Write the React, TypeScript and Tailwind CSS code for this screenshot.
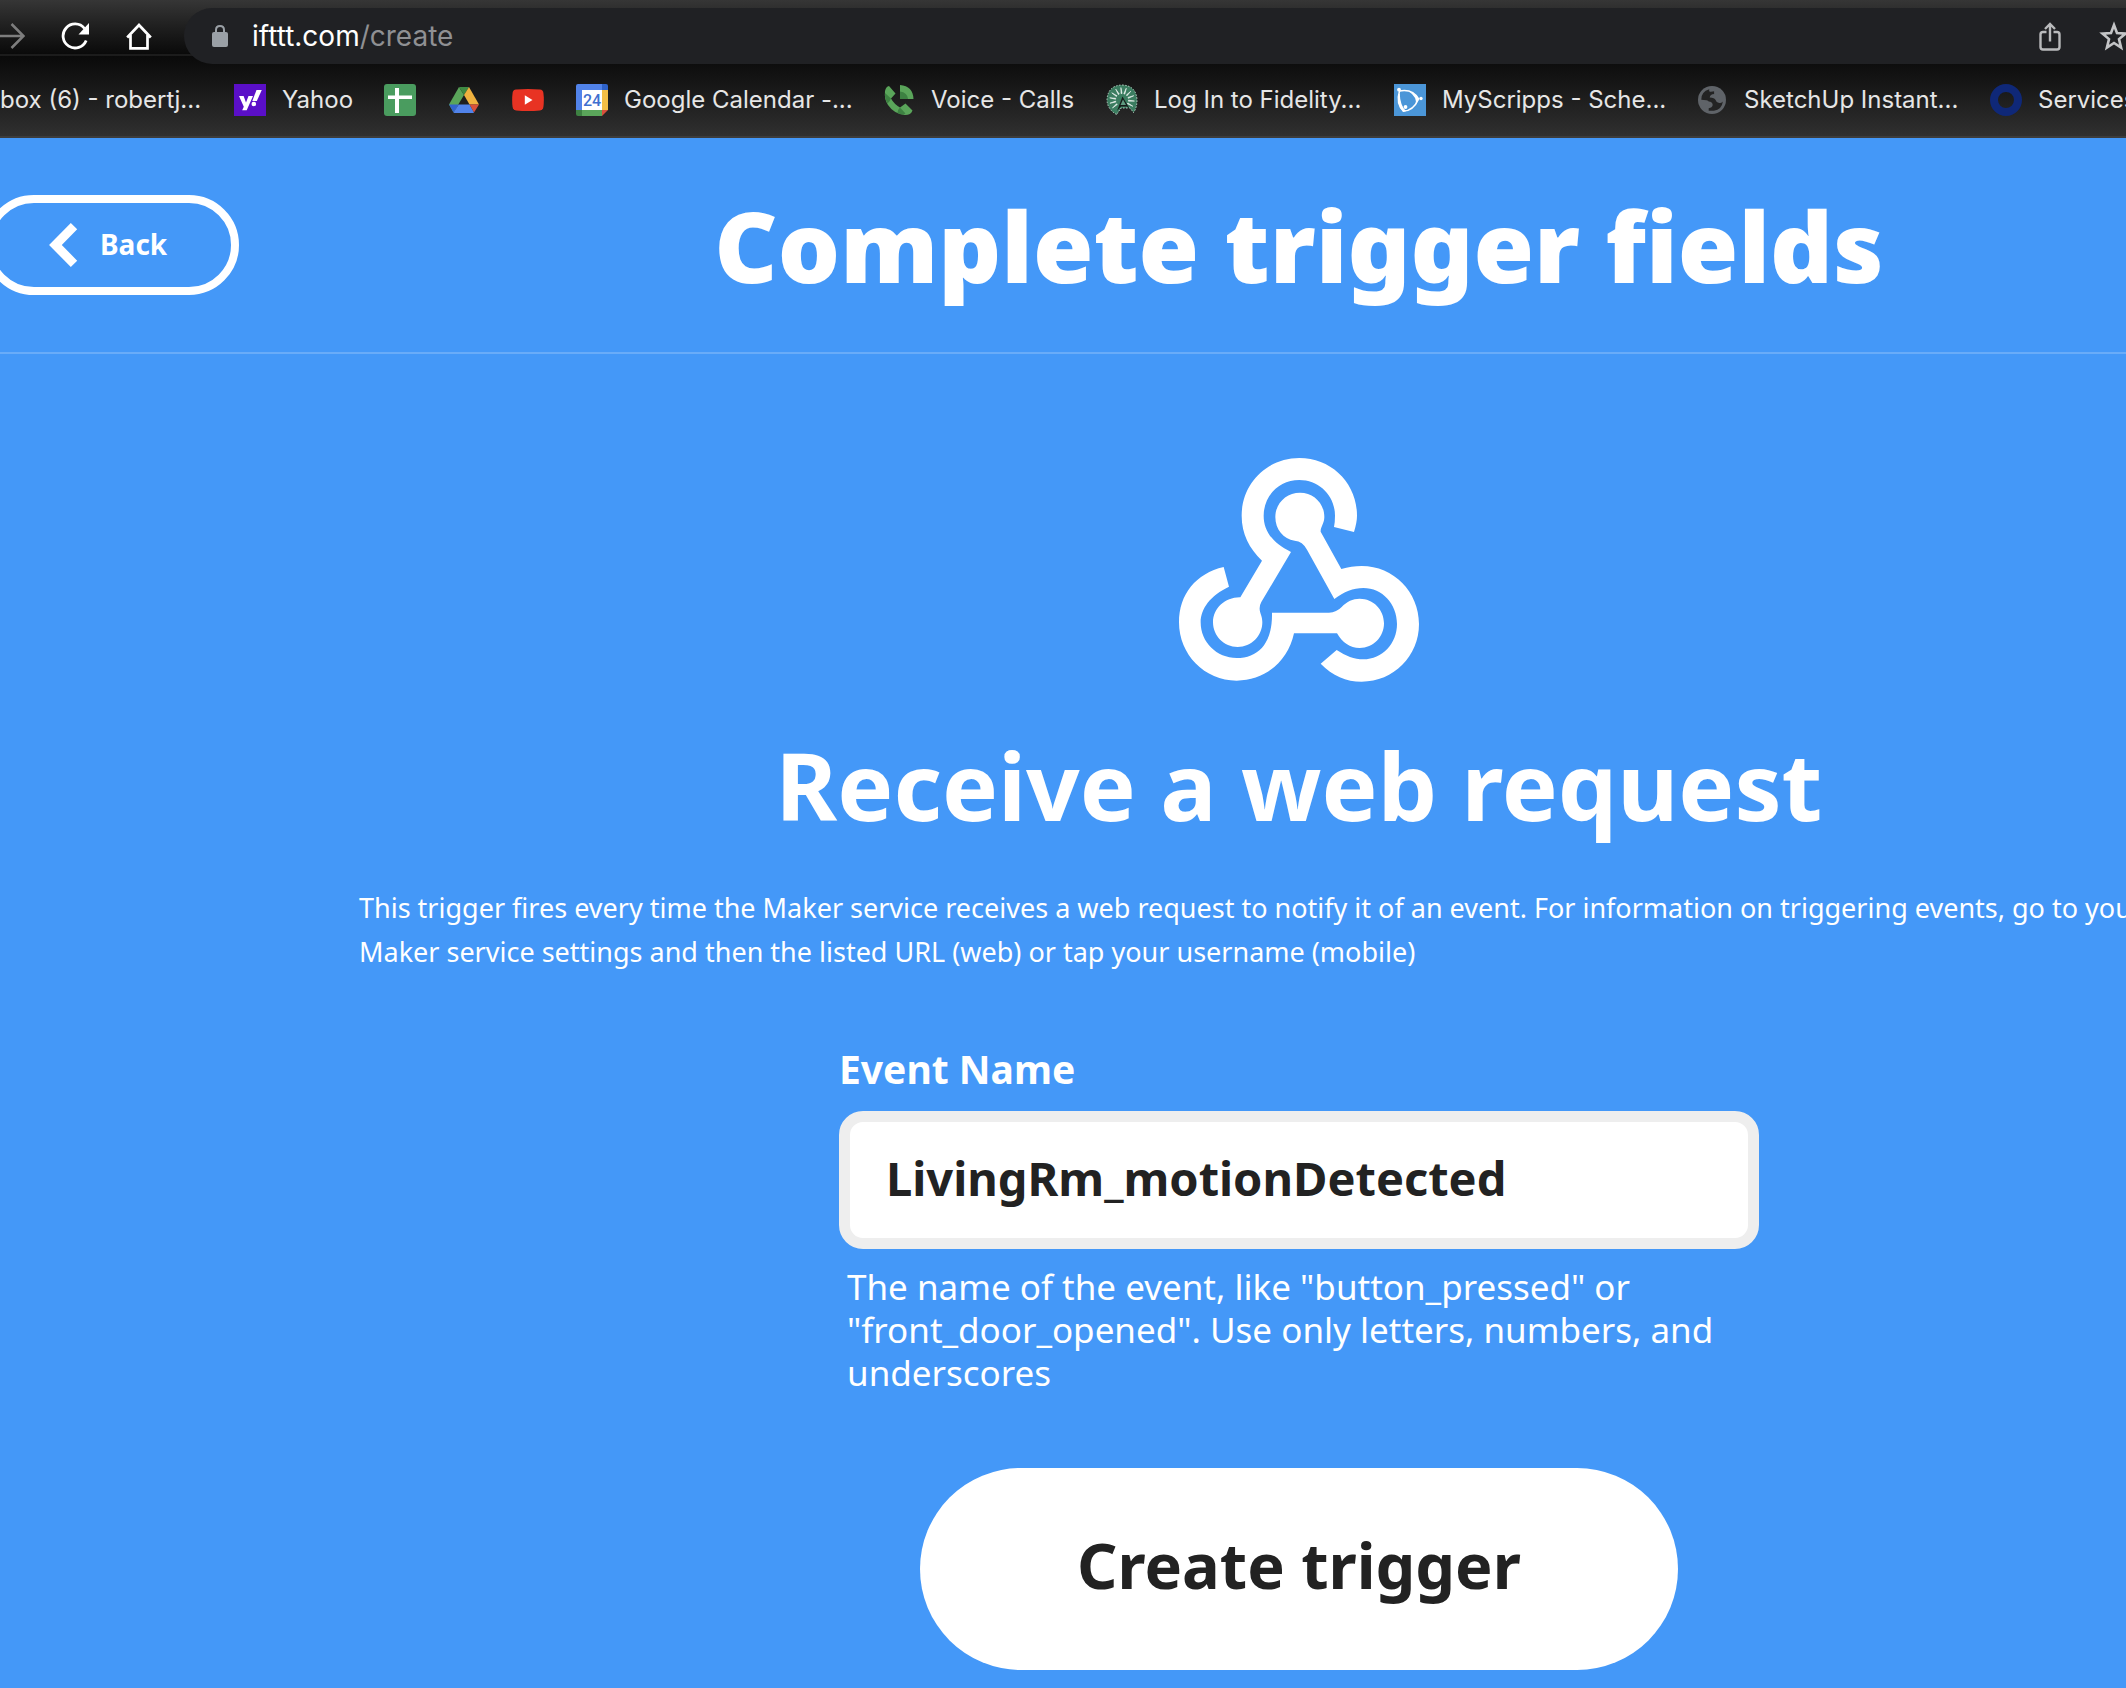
import { useState, type ReactNode } from "react";

function YahooIcon() {
  return (
    <svg viewBox="0 0 32 32" className="h-8 w-8" aria-hidden="true">
      <rect width="32" height="32" fill="#5a0fc8" />
      <path d="M5 12h4.600l2.400 6.500 2.500-6.500H19l-6.300 14.300H8.200l1.600-3.500z" fill="#fff" />
      <path d="M22.500 6h5.300l-5 11h-4.500z" fill="#fff" />
      <circle cx="19.800" cy="20" r="2.300" fill="#fff" />
    </svg>
  );
}

function SheetsIcon() {
  return (
    <svg viewBox="0 0 32 32" className="h-8 w-8" aria-hidden="true">
      <rect width="32" height="32" rx="3" fill="#4a9c5f" />
      <path d="M11 4h4v25h-4zM4 11.500h24v3.500H4z" fill="#fff" />
    </svg>
  );
}

function DriveIcon() {
  return (
    <svg viewBox="0 0 32 32" className="h-8 w-8" aria-hidden="true">
      <path d="M11 3 1 20.500 5.500 28.500 16 11z" fill="#5aa55a" />
      <path d="M11 3h10l-5 8z" fill="#3f8a43" />
      <path d="M21 3 31 20.500h-9.500L16 11z" fill="#f0b23f" />
      <path d="M1 20.500h9.700L5.500 28.500z" fill="#3263cf" />
      <path d="M10.700 20.500h10.800L26 28.500q-.6.500-1.500.500h-17q-1.200 0-2-.5z" fill="#5183ea" />
      <path d="M21.500 20.500H31L26 28.500z" fill="#d9503b" />
    </svg>
  );
}

function YoutubeIcon() {
  return (
    <svg viewBox="0 0 32 32" className="h-8 w-8" aria-hidden="true">
      <path d="M4 5.600Q16 4.400 28 5.600q3 .4 3.400 3.400.9 7 0 14-.4 3-3.400 3.400-12 1.200-24 0Q1 26 .6 23q-.9-7 0-14Q1 6 4 5.600z" fill="#e83323" />
      <path d="M12.800 11.300v9.400L20.500 16z" fill="#fff" />
    </svg>
  );
}

function CalendarIcon() {
  return (
    <svg viewBox="0 0 32 32" className="h-8 w-8" aria-hidden="true">
      <path d="M2 0h24v6H6v20H0V2Q0 0 2 0z" fill="#5183ea" />
      <path d="M26 0h4q2 0 2 2v4h-6z" fill="#2e62c9" />
      <path d="M26 6h6v20h-6z" fill="#f3be45" />
      <path d="M6 26h20v6H6z" fill="#5aa55a" />
      <path d="M0 26h6v6H2q-2 0-2-2z" fill="#3d8142" />
      <path d="M26 26h6l-6 6z" fill="#d9503b" />
      <path d="M6 6h20v20H6z" fill="#fff" />
      <text x="16" y="21.500" textAnchor="middle" fontSize="16" fontWeight="500" fill="#3f6fd0" fontFamily="Roboto, sans-serif">24</text>
    </svg>
  );
}

function VoiceIcon() {
  return (
    <svg viewBox="0 0 32 32" className="h-8 w-8" aria-hidden="true">
      <path d="M6 2 12.500 9.500 8 14.500Q11 20 17 23.500L22.500 19.500 29.500 26.500Q28 31 22 31 11 30 5 21 1 15 2 7 3 2.500 6 2z" fill="#5aa55a" />
      <path d="M2 9 8 14.500Q7 17.500 4.500 19.500 1.500 14 2 9zM17 23.500l5.500 6Q19 31.500 14.500 29q.5-4 2.500-5.500z" fill="#3d8142" />
      <path d="M17 1q13 1 13.500 14H17z" fill="#5aa55a" />
      <path d="M17 7.500q7.500 1 8 7.500h-8z" fill="#3d8142" />
    </svg>
  );
}

const RAYS = [-130, -105, -80, -55, -30, -5, 20, 45, 70, 95, 120];

function FidelityIcon() {
  return (
    <svg viewBox="0 0 32 32" className="h-8 w-8" aria-hidden="true">
      <path d="M10.500 30.500Q1 25 1 15.500 2 1.500 16 1 30 1.500 31 15.500 31 24 27.500 28.500L24 24h-9z" fill="#3b7d60" stroke="#b9d3c6" strokeWidth="1" strokeDasharray="1.500 1.500" />
      {RAYS.map((angle) => (
        <path key={angle} d="M15.600 9.500 16 3.500l.6 6z" fill="#eaf2ee" stroke="#eaf2ee" strokeWidth=".6" transform={`rotate(${angle} 16 16)`} />
      ))}
      <path d="M16.500 12.500 11 27l4-4.500h6l3 3z" fill="#161b19" />
      <path d="M17 15.500 14.500 21h5.500z" fill="#5f9a80" />
    </svg>
  );
}

function ScrippsIcon() {
  return (
    <svg viewBox="0 0 32 32" className="h-8 w-8" aria-hidden="true">
      <rect width="32" height="32" fill="#4b96d8" />
      <path d="M5.500 7C14 5.500 21 8.500 24.500 15 21 23 16 27 9.500 27 4 22 3.500 14 5.500 7z" fill="none" stroke="#fff" strokeWidth="1.600" />
      <path d="M4.500 10Q3 21 9 28l3-.8Q6 21 5.800 10zM15 7.500q7 2 10 7.500l-3.200 6q1.400-8-6.800-13.500z" fill="#fff" />
      <circle cx="5" cy="5.700" r="1.900" fill="#fff" />
      <circle cx="27" cy="14.500" r="1.700" fill="#fff" />
      <circle cx="11.500" cy="23" r="1.900" fill="#fff" />
    </svg>
  );
}

function GlobeIcon() {
  return (
    <svg viewBox="0 0 32 32" className="h-8 w-8" aria-hidden="true">
      <circle cx="16" cy="16" r="14" fill="#5f6368" />
      <path d="M5.300 15.800q-.3-8 8-10.500-.6 1.500.4 2.400 2 .3 4.600-.4v2.800q-4.200.4-4.600 3.500 4.800.2 6 2.600.7 2.700 3.500 2.700 2.800.4 3.700-1.300-1.200 8.300-9 9.200h-5.200v-2.600q3.500-.4 4-3.200-.2-3.400-4-3.600-.6-1.600-7.400-1.600z" fill="#232323" />
      <path d="M18.300 6.500q3.800.3 6 3-.3 1.400-2.500 1.500-3 .4-3.500-1.500z" fill="#5f6368" />
    </svg>
  );
}

function RingIcon() {
  return (
    <svg viewBox="0 0 32 32" className="h-8 w-8" aria-hidden="true">
      <circle cx="16" cy="16" r="12" fill="none" stroke="#0f2878" strokeWidth="8" />
    </svg>
  );
}

type Bookmark = { id: string; name: string; label?: string; width?: string; icon?: ReactNode };

const BOOKMARKS: Bookmark[] = [
  { id: "inbox", name: "Inbox", label: "box (6) - robertj...", width: "w-[202px]" },
  { id: "yahoo", name: "Yahoo", label: "Yahoo", width: "w-[70px]", icon: <YahooIcon /> },
  { id: "sheets", name: "Sheets", icon: <SheetsIcon /> },
  { id: "drive", name: "Drive", icon: <DriveIcon /> },
  { id: "youtube", name: "YouTube", icon: <YoutubeIcon /> },
  { id: "calendar", name: "Calendar", label: "Google Calendar -...", width: "w-[227px]", icon: <CalendarIcon /> },
  { id: "voice", name: "Voice", label: "Voice - Calls", width: "w-[143px]", icon: <VoiceIcon /> },
  { id: "fidelity", name: "Fidelity", label: "Log In to Fidelity...", width: "w-[208px]", icon: <FidelityIcon /> },
  { id: "scripps", name: "MyScripps", label: "MyScripps - Sche...", width: "w-[222px]", icon: <ScrippsIcon /> },
  { id: "sketchup", name: "SketchUp", label: "SketchUp Instant...", width: "w-[214px]", icon: <GlobeIcon /> },
  { id: "services", name: "Services", label: "Services", width: "w-[100px]", icon: <RingIcon /> },
];

function BrowserChrome() {
  return (
    <div className="font-[Inter,sans-serif]">
      <div className="flex h-14 items-start border-b-2 border-[#1c1c1c] bg-linear-to-b from-[#363636] to-[#0a0a0a]">
        <div className="flex h-[72px] shrink-0 items-center gap-9">
          <button type="button" aria-label="Forward" className="h-7 w-[25px]">
            <svg viewBox="0 0 25 28" className="h-7 w-[25px]" fill="none" stroke="#7d7d7d" strokeWidth="2.500" aria-hidden="true">
              <path d="M0 14h23M11.500 2 23.500 14 11.500 26" />
            </svg>
          </button>
          <button type="button" aria-label="Reload" className="h-7 w-7">
            <svg viewBox="0 0 28 28" className="h-7 w-7" fill="none" aria-hidden="true">
              <path d="M25.200 18.500A12 12 0 1 1 23.500 6.500" stroke="#fff" strokeWidth="2.800" />
              <path d="M28 1v11.500H17.500z" fill="#fff" />
            </svg>
          </button>
          <button type="button" aria-label="Home" className="h-7 w-7">
            <svg viewBox="0 0 28 28" className="h-7 w-7" fill="none" stroke="#fff" strokeWidth="2.700" aria-hidden="true">
              <path d="M2.200 15.500 14 3l11.800 12.500M5.500 13v13.300h17V13" />
            </svg>
          </button>
        </div>
        <div className="relative mt-2 ml-[31px] flex h-14 min-w-0 flex-1 items-center gap-6 overflow-hidden rounded-l-full bg-[#202124] pl-7">
          <svg viewBox="0 0 16 22" className="h-[22px] w-4 shrink-0" aria-hidden="true">
            <rect y="7" width="16" height="15" rx="2" fill="#9aa0a6" />
            <path d="M4 8V5q0-4 4-4t4 4v3" fill="none" stroke="#9aa0a6" strokeWidth="2" />
          </svg>
          <div role="textbox" aria-label="Address" className="flex-1 text-[28px] leading-8 whitespace-nowrap text-[#8f9093]">
            <span className="text-white">ifttt.com</span>/create
          </div>
          <div className="-mr-1 flex shrink-0 items-center gap-8">
            <button type="button" aria-label="Share" className="h-8 w-8">
              <svg viewBox="0 0 32 32" className="h-8 w-8" fill="none" stroke="#b9babc" strokeWidth="2.400" aria-hidden="true">
                <path d="M12.500 12H9q-2.500 0-2.500 2.500V27q0 2.500 2.500 2.500h14q2.500 0 2.500-2.500V14.500Q25.500 12 23 12h-3.500M16 21.500V4M11 9l5-5 5 5" />
              </svg>
            </button>
            <button type="button" aria-label="Bookmark" className="h-8 w-8">
              <svg viewBox="0 0 32 32" className="h-8 w-8" fill="none" stroke="#c3c4c6" strokeWidth="2.600" aria-hidden="true">
                <path d="M16 5l3 8 8.500.6-6.500 5.500 2.100 8.500L16 23l-7.100 4.600 2.100-8.500-6.500-5.500 8.500-.6z" />
              </svg>
            </button>
          </div>
        </div>
      </div>
      <nav aria-label="Bookmarks" className="flex h-[82px] items-center gap-8 overflow-hidden border-b-2 border-[#3d3d3d] bg-linear-to-b from-[#0a0a0a] to-[#303030] pt-2">
        {BOOKMARKS.map((b) => (
          <a key={b.id} href={`#${b.id}`} aria-label={b.name} className="flex shrink-0 items-center gap-4 text-[24px] leading-8 text-[#e6e6e6]">
            {b.icon}
            {b.label && <span className={`${b.width} whitespace-nowrap`}>{b.label}</span>}
          </a>
        ))}
      </nav>
    </div>
  );
}

function WebhooksLogo() {
  return (
    <svg viewBox="87 84 720 672" className="h-[224px] w-[240px]" fill="#fff" role="img" aria-label="Webhooks">
      <path d="M612 306C618 285 621 270 621 257 621 160 545 84 448 84 351 84 275 160 275 257 275 312 298 355 336 392L271 502C226 501 189 535 189 577 189 618 222 651 263 651 304 651 337 618 337 577 337 556 328 548 329 534Q329 525 334 516L423 366C365 338 341 300 341 257 341 197 388 150 448 150 508 150 555 197 555 257Q555 276 552 291Z" />
      <path d="M512 305 574 417C594 411 615 408 635 408 731 408 807 486 807 582 807 678 731 755 635 755 588 755 548 737 512 701L560 660C587 678 613 688 640 688 697 688 741 640 741 582 741 522 697 474 640 474 610 474 582 485 553 507L471 359Q458 334 434 332C400 327 376 298 376 261 376 220 409 188 450 188 491 188 523 220 523 261 523 280 511 292 512 305Z" />
      <path d="M221 411 237 470C182 496 152 535 152 577 152 637 200 684 260 684 325 684 368 640 366 548L537 548Q560 547 575 531C591 514 608 506 629 506 670 506 702 539 702 580 702 621 670 654 629 654 600 654 577 638 561 610L432 610C414 694 345 752 260 752 164 752 87 674 87 577 87 493 138 430 221 411Z" />
    </svg>
  );
}

export default function App() {
  const [eventName, setEventName] = useState("LivingRm_motionDetected");
  return (
    <div className="min-h-screen overflow-hidden bg-[#4498f8]">
      <BrowserChrome />
      <div className="-ml-4 w-[calc(100%+504px)] font-['Noto_Sans',sans-serif] text-white">
        <header className="grid grid-cols-[1fr_auto_1fr] items-center border-b-2 border-white/20 py-[47px]">
          <button type="button" className="flex h-[100px] w-[255px] items-center gap-[22px] rounded-full border-8 border-white pl-[57px] text-[28px] leading-10 font-bold">
            <svg viewBox="0 0 29 44" className="h-11 w-[29px]" fill="none" stroke="#fff" strokeWidth="9" aria-hidden="true">
              <path d="M25 3.200 6.400 22 25 40.800" />
            </svg>
            <span className="pb-0.5">Back</span>
          </button>
          <h1 className="text-[98px] leading-[120px] font-black">Complete trigger fields</h1>
        </header>
        <main className="flex flex-col items-center px-9 pt-[104px] pb-[18px]">
          <WebhooksLogo />
          <h2 className="mt-[45px] text-[94px] leading-[116px] font-bold">Receive a web request</h2>
          <p className="mt-[43px] w-full max-w-[1880px] text-[27px] leading-[44px]">
            This trigger fires every time the Maker service receives a web request to notify it of an event. For information on triggering events, go to your
            <br />
            Maker service settings and then the listed URL (web) or tap your username (mobile)
          </p>
          <form className="mt-[69px] flex w-full max-w-[920px] flex-col" onSubmit={(e) => e.preventDefault()}>
            <label htmlFor="event-name" className="text-[39px] leading-[52px] font-bold">Event Name</label>
            <input
              id="event-name"
              type="text"
              value={eventName}
              onChange={(e) => setEventName(e.target.value)}
              aria-describedby="event-hint"
              className="mt-4 h-[138px] w-full rounded-3xl border-[11px] border-[#eeeeee] bg-white px-9 pb-1 text-[47px] font-bold text-[#222222] outline-none"
            />
            <p id="event-hint" className="mt-4 px-2 text-[35px] leading-[43px]">
              The name of the event, like "button_pressed" or "front_door_opened". Use only letters, numbers, and underscores
            </p>
            <button type="submit" className="mt-[74px] h-[202px] w-[758px] self-center rounded-full bg-white pb-2 text-[63px] font-bold text-[#222222]">
              Create trigger
            </button>
          </form>
        </main>
      </div>
    </div>
  );
}
